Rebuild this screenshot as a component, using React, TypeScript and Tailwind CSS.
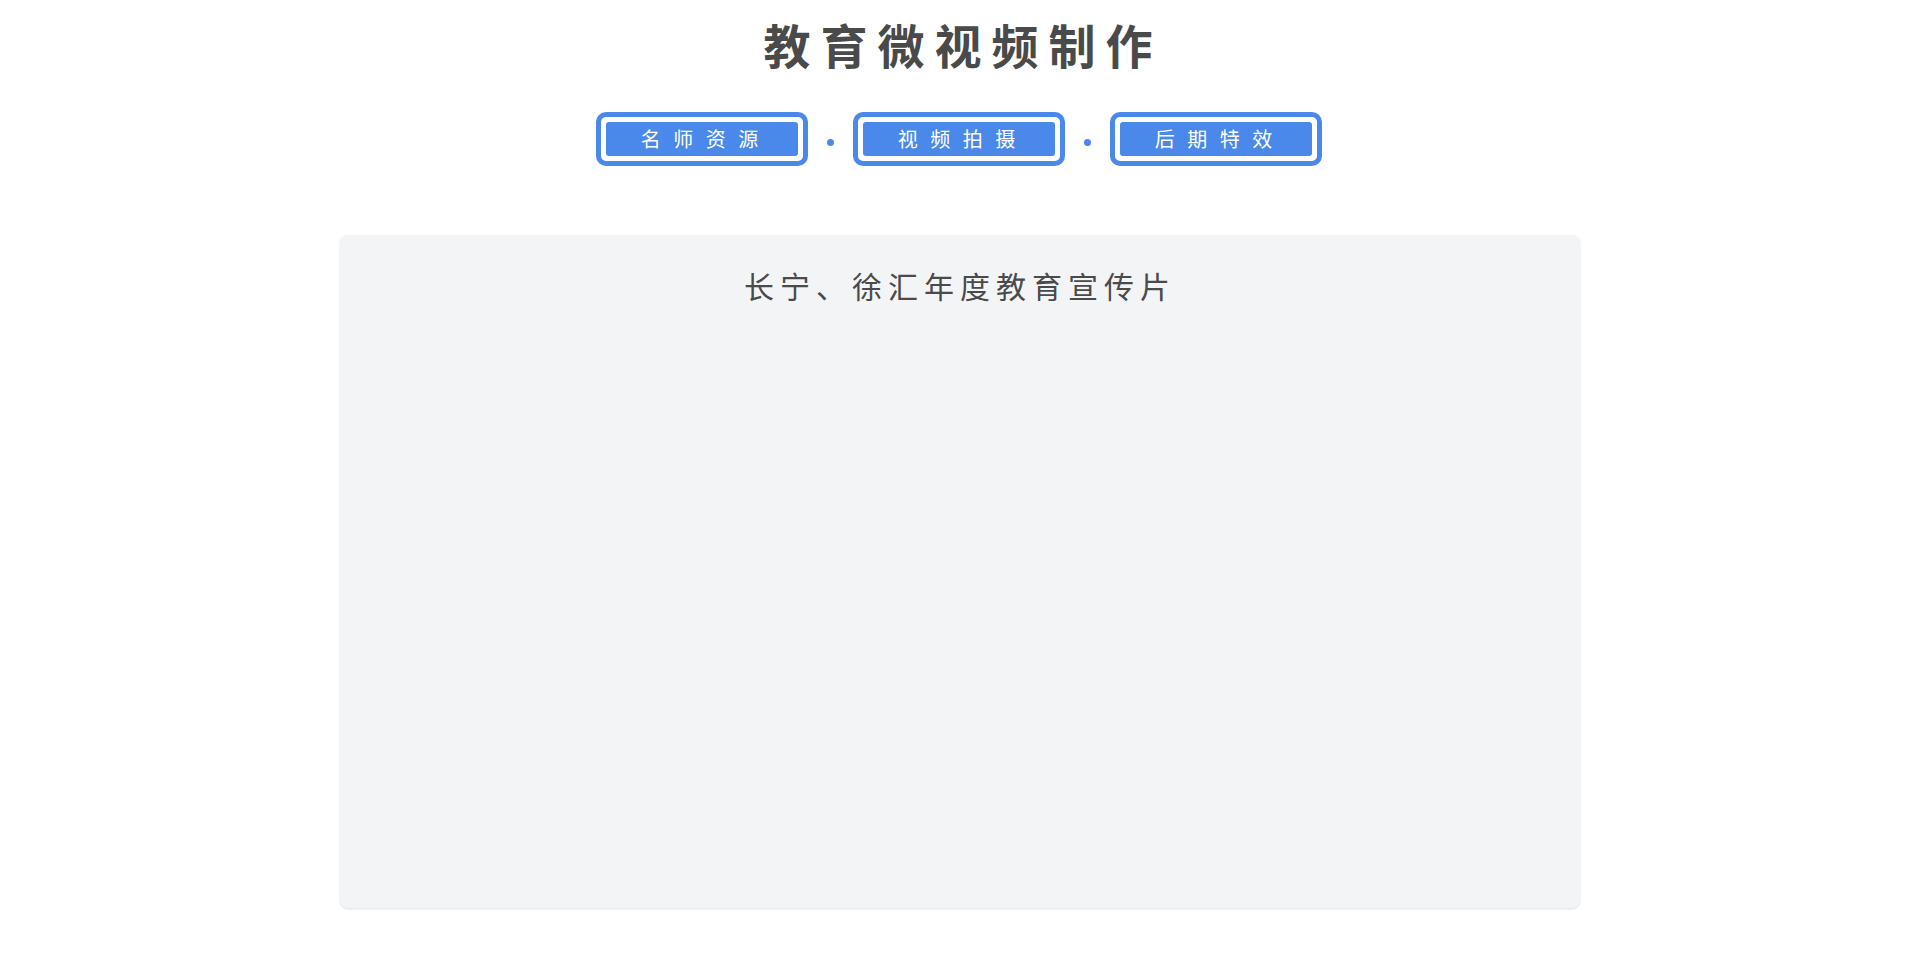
import React from 'react';

const TABS = ['名 师 资 源', '视 频 拍 摄', '后 期 特 效'];

function TabButton({ label }: { label: string }) {
  return (
    <div className="w-[212px] h-[54px] rounded-[10px] border-[5px] border-[#4a89ea] bg-white p-[5px]">
      <div className="h-full w-full rounded-[3px] bg-[#4a89ea] flex items-center justify-center text-white text-[20px] leading-none tracking-[4px]">
        {label}
      </div>
    </div>
  );
}

export default function App() {
  return (
    <div className="min-h-screen bg-white flex flex-col items-center font-['Noto_Sans_CJK_SC',sans-serif]">
      <h1 className="mt-[20px] text-[47px] leading-[47px] font-bold tracking-[10px] pl-[6px] text-[#4a4a4a]">
        教育微视频制作
      </h1>

      <div className="mt-[45px] mr-[3px] flex items-center gap-[19px]">
        {TABS.map((t, i) => (
          <React.Fragment key={t}>
            {i > 0 && <span className="mt-[6px] w-[7px] h-[7px] rounded-full bg-[#4a89ea]" />}
            <TabButton label={t} />
          </React.Fragment>
        ))}
      </div>

      <div className="mt-[69px] w-[1240px] h-[673px] rounded-lg bg-[#f3f4f6] shadow-sm flex flex-col items-center pt-[35px]">
        <h2 className="text-[30px] leading-[30px] font-normal tracking-[6px] text-[#4a4a4a]">
          长宁、徐汇年度教育宣传片
        </h2>
      </div>
    </div>
  );
}
